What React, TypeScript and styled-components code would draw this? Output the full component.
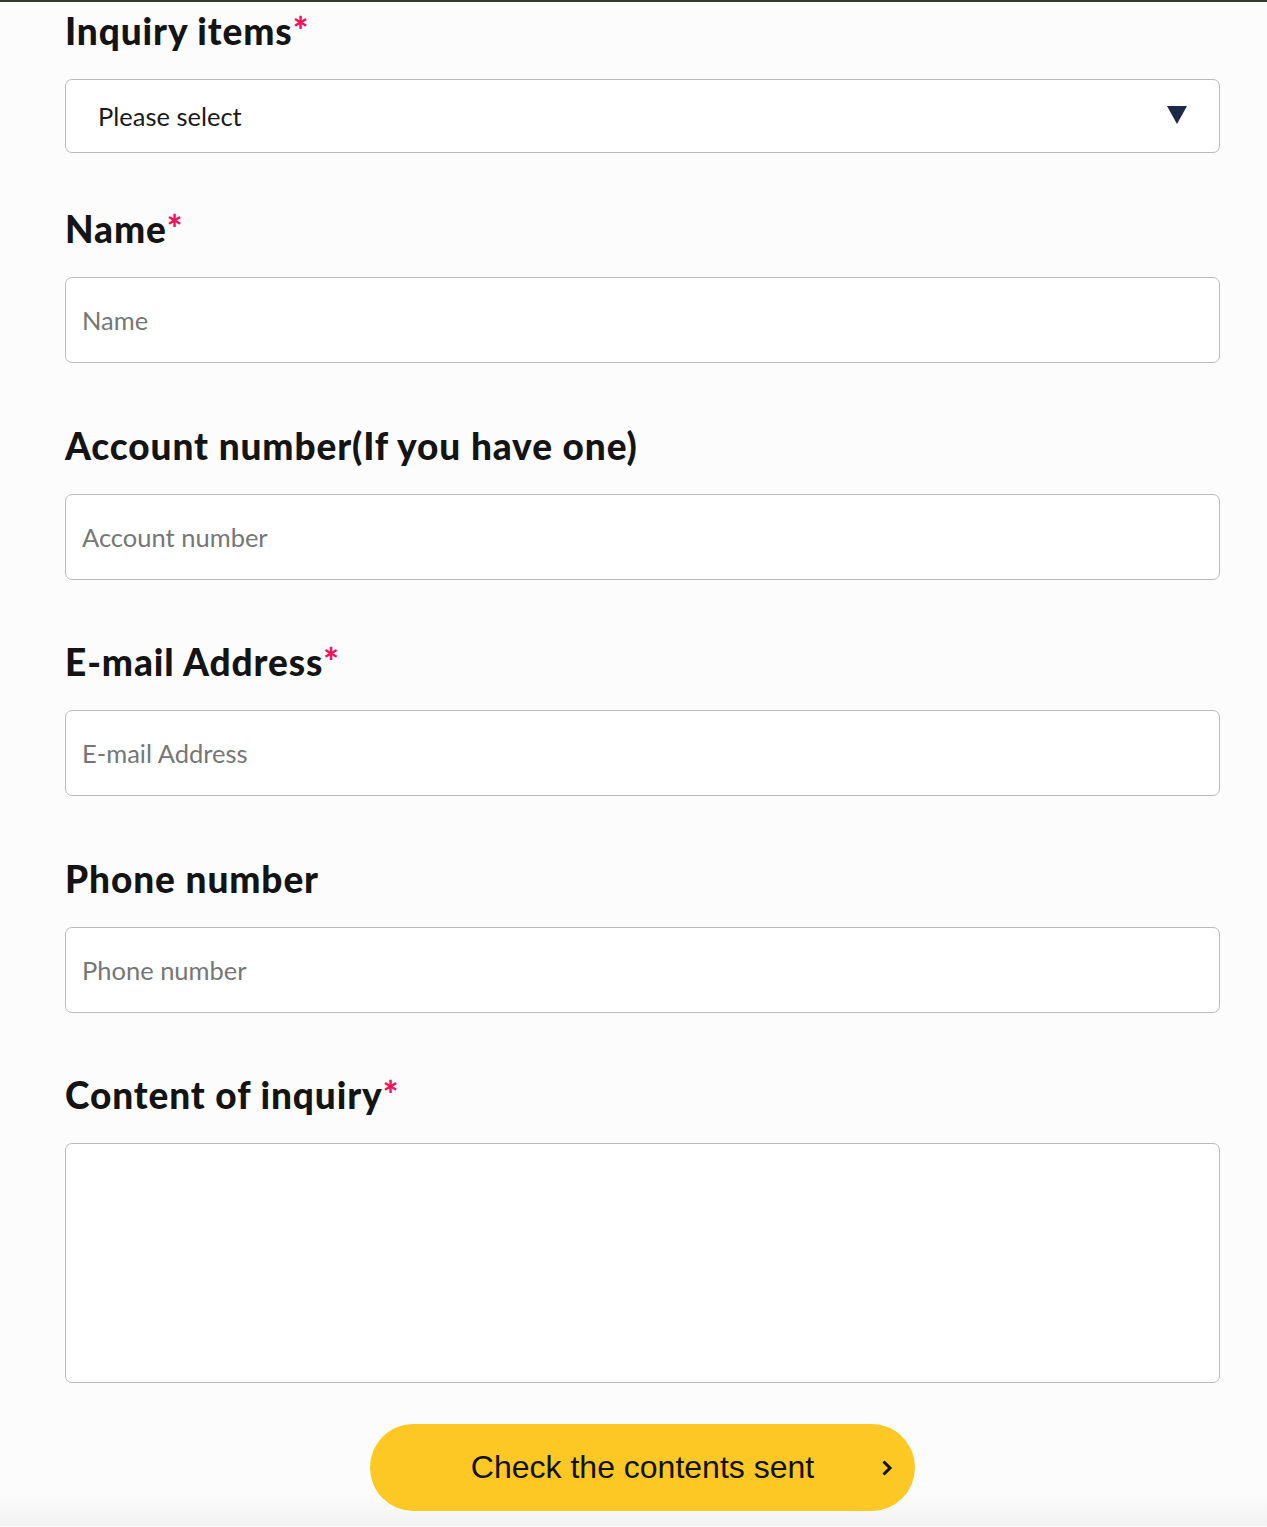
import styled, { createGlobalStyle } from 'styled-components';

const GlobalStyle = createGlobalStyle`
  html, body {
    margin: 0;
    padding: 0;
    background: #fcfcfc;
  }
  * {
    box-sizing: border-box;
  }
`;

type FieldDef = {
  label: string;
  placeholder: string;
  required?: boolean;
};

const inputFields: FieldDef[] = [
  { label: 'Name', placeholder: 'Name', required: true },
  { label: 'Account number(If you have one)', placeholder: 'Account number' },
  { label: 'E-mail Address', placeholder: 'E-mail Address', required: true },
  { label: 'Phone number', placeholder: 'Phone number' },
];

const App = () => {
  return (
    <Page>
      <GlobalStyle />
      <Form onSubmit={(e) => e.preventDefault()}>
        <Field $gap={54}>
          <Label>
            Inquiry items<Required>*</Required>
          </Label>
          <SelectWrap>
            <Select defaultValue="">
              <option value="">Please select</option>
              <option value="account">Account</option>
              <option value="service">Service</option>
              <option value="other">Other</option>
            </Select>
            <Arrow />
          </SelectWrap>
        </Field>

        {inputFields.map((f) => (
          <Field key={f.label} $gap={60.5}>
            <Label>
              {f.label}
              {f.required && <Required>*</Required>}
            </Label>
            <Input type="text" placeholder={f.placeholder} />
          </Field>
        ))}

        <Field $gap={41}>
          <Label>
            Content of inquiry<Required>*</Required>
          </Label>
          <TextArea />
        </Field>

        <ButtonRow>
          <SubmitButton type="submit">
            Check the contents sent
            <Chevron viewBox="0 0 12 18" aria-hidden>
              <path d="M2.5 2.5 L9 9 L2.5 15.5" />
            </Chevron>
          </SubmitButton>
        </ButtonRow>
      </Form>
    </Page>
  );
};

export default App;

const Page = styled.div`
  border-top: 2px solid #333a27;
  padding: 7px 0 15px;
  background: linear-gradient(
    to bottom,
    #fcfcfc calc(100% - 30px),
    #f1f1f1 100%
  );
`;

const Form = styled.form`
  width: 1155px;
  margin-left: 65px;
  display: flex;
  flex-direction: column;
`;

const Field = styled.div<{ $gap: number }>`
  display: flex;
  flex-direction: column;
  margin-bottom: ${(p) => p.$gap}px;
`;

const Label = styled.label`
  font-family: Lato, 'Noto Sans', sans-serif;
  font-weight: 900;
  font-size: 37px;
  line-height: 44px;
  letter-spacing: 0.9px;
  color: #141414;
  margin-bottom: 26px;
`;

const Required = styled.span`
  color: #f0145a;
  font-weight: 900;
  letter-spacing: 0;
`;

const controlBase = `
  width: 100%;
  background: #ffffff;
  border: 1.5px solid #bbbbbb;
  border-radius: 7px;
  font-family: Lato, 'Noto Sans', sans-serif;
  font-size: 25.5px;
  outline: none;
`;

const SelectWrap = styled.div`
  position: relative;
`;

const Select = styled.select`
  ${controlBase}
  height: 74px;
  padding: 0 70px 0 32px;
  color: #1a1a1a;
  appearance: none;
  -webkit-appearance: none;
`;

const Arrow = styled.span`
  position: absolute;
  right: 33px;
  top: 27px;
  width: 0;
  height: 0;
  border-left: 10px solid transparent;
  border-right: 10px solid transparent;
  border-top: 18px solid #1b2a45;
  pointer-events: none;
`;

const Input = styled.input`
  ${controlBase}
  height: 86px;
  padding: 0 16px;
  color: #1a1a1a;

  &::placeholder {
    color: #767676;
  }
`;

const TextArea = styled.textarea`
  ${controlBase}
  height: 240px;
  padding: 16px;
  resize: none;
  color: #1a1a1a;
`;

const ButtonRow = styled.div`
  display: flex;
  justify-content: center;
`;

const SubmitButton = styled.button`
  position: relative;
  width: 545px;
  height: 87px;
  border: none;
  border-radius: 44px;
  background: #fdc823;
  color: #111111;
  font-family: 'Liberation Sans', Arial, sans-serif;
  font-size: 32px;
  cursor: pointer;
`;

const Chevron = styled.svg`
  position: absolute;
  right: 22px;
  top: 50%;
  width: 12px;
  height: 18px;
  margin-top: -9px;
  fill: none;
  stroke: #111111;
  stroke-width: 3;
`;
